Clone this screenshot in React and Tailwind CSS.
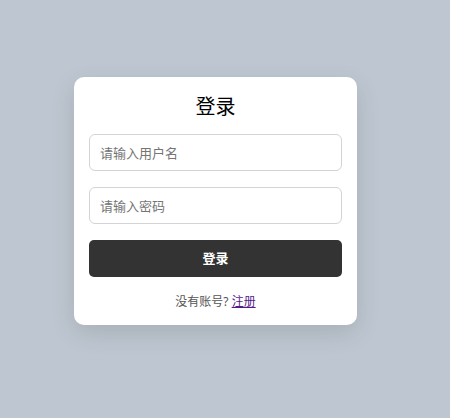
export default function App() {
  return (
    <div
      className="h-screen w-full bg-[#bec7d1] pl-[74px] pt-[77px]"
      style={{ fontFamily: '"Noto Sans", "Noto Sans CJK SC", sans-serif' }}
    >
      <div className="flex w-[283px] flex-col rounded-[10px] bg-white px-[15px] pb-[13px] pt-[15px] shadow-[0_8px_24px_rgba(0,0,0,0.12)]">
        <h1 className="text-center text-[20px] leading-[30px] text-black">登录</h1>
        <input
          type="text"
          placeholder="请输入用户名"
          className="mt-[12px] h-[37px] w-full rounded-[6px] border border-[#d4d4d8] px-[10px] text-[13px] text-[#333] placeholder:text-[#757575] outline-none"
        />
        <input
          type="password"
          placeholder="请输入密码"
          className="mt-[16px] h-[37px] w-full rounded-[6px] border border-[#d4d4d8] px-[10px] text-[13px] text-[#333] placeholder:text-[#757575] outline-none"
        />
        <button className="mt-[16px] h-[37px] w-full rounded-[5px] bg-[#333333] text-[13px] font-bold text-white">
          登录
        </button>
        <p className="mt-[15px] text-center text-[12px] leading-[20px] text-[#555]">
          没有账号?{" "}
          <a href="#" className="text-[#551a8b] underline">
            注册
          </a>
        </p>
      </div>
    </div>
  );
}
